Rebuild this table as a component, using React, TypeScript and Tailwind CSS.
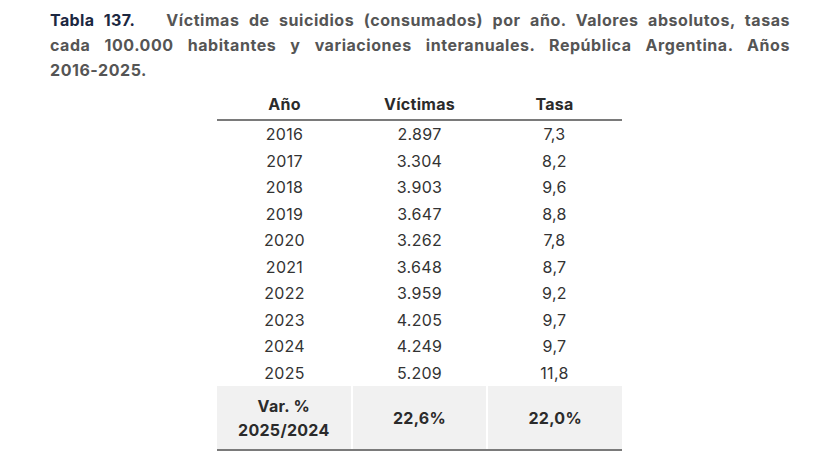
import React from 'react';

const rows = [
  { year: '2016', victims: '2.897', rate: '7,3' },
  { year: '2017', victims: '3.304', rate: '8,2' },
  { year: '2018', victims: '3.903', rate: '9,6' },
  { year: '2019', victims: '3.647', rate: '8,8' },
  { year: '2020', victims: '3.262', rate: '7,8' },
  { year: '2021', victims: '3.648', rate: '8,7' },
  { year: '2022', victims: '3.959', rate: '9,2' },
  { year: '2023', victims: '4.205', rate: '9,7' },
  { year: '2024', victims: '4.249', rate: '9,7' },
  { year: '2025', victims: '5.209', rate: '11,8' },
];

const font = { fontFamily: 'Inter, "Noto Sans", sans-serif' };

export default function App() {
  return (
    <div className="w-[819px] h-[463px] bg-white overflow-hidden" style={font}>
      {/* caption, one block per line so breaks match the PDF */}
      <div className="pl-[50px] pr-[29px] pt-[8px] text-[16px] font-bold leading-[25px] tracking-[0.55px] text-[#555555]">
        <div className="text-justify [text-align-last:justify]">
          <span className="text-[#1c2841] tracking-[0.4px]">Tabla 137.</span>
          <span className="inline-block w-[31px]" />
          Víctimas de suicidios (consumados) por año. Valores absolutos, tasas
        </div>
        <div className="text-justify [text-align-last:justify]">
          cada 100.000 habitantes y variaciones interanuales. República Argentina. Años
        </div>
        <div>2016-2025.</div>
      </div>

      <div className="ml-[217px] mt-[7px] w-[405px] text-[#333333] tracking-[0.3px]">
        <div className="grid grid-cols-3 h-[31px] items-center border-b-2 border-[#7a7a7a] text-[16px] font-bold text-[#2b2b2b]">
          <div className="text-center pb-[2px]">Año</div>
          <div className="text-center pb-[2px]">Víctimas</div>
          <div className="text-center pb-[2px]">Tasa</div>
        </div>
        {rows.map((r) => (
          <div key={r.year} className="grid grid-cols-3 h-[26.5px] items-center text-[16px]">
            <div className="text-center">{r.year}</div>
            <div className="text-center">{r.victims}</div>
            <div className="text-center">{r.rate}</div>
          </div>
        ))}
        <div className="grid grid-cols-3 gap-[2px] border-b-2 border-[#7a7a7a] text-[16px] font-bold text-[#2b2b2b]">
          <div className="bg-[#f1f1f1] h-[63px] flex flex-col items-center justify-center leading-[24px]">
            <span>Var. %</span>
            <span>2025/2024</span>
          </div>
          <div className="bg-[#f1f1f1] h-[63px] flex items-center justify-center">22,6%</div>
          <div className="bg-[#f1f1f1] h-[63px] flex items-center justify-center">22,0%</div>
        </div>
      </div>
    </div>
  );
}
